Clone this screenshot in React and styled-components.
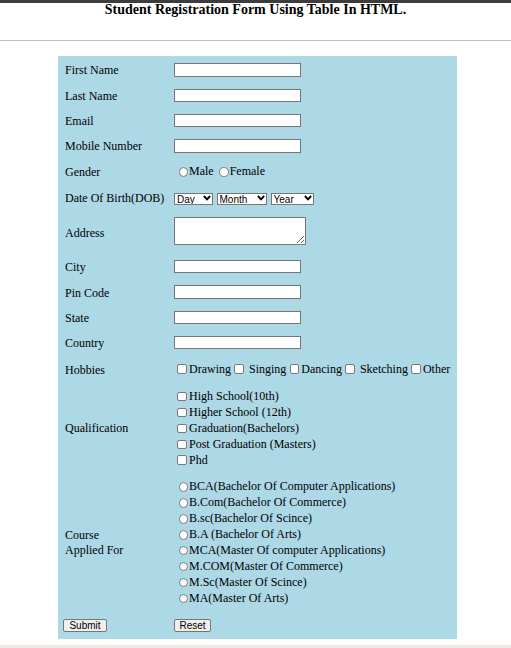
import React from 'react';
import styled, { createGlobalStyle } from 'styled-components';

const Global = createGlobalStyle`
  html, body { margin: 0; padding: 0; background: #fff; overflow: hidden; }
  body { font-family: "Liberation Serif", "Times New Roman", serif; color: #000; }
`;

const Page = styled.div`
  height: 648px;
  display: flex;
  flex-direction: column;
`;

const TopBar = styled.div`
  flex: none;
  height: 3px;
  background: #3c3c3c;
`;

const Title = styled.h1`
  margin: 0;
  font-size: 14px;
  line-height: 13px;
  font-weight: bold;
  text-align: center;
`;

const Rule = styled.hr`
  flex: none;
  margin: 24px 0 0;
  height: 0;
  border: 0;
  border-top: 1px solid #c0c0c0;
`;

const FormTable = styled.form`
  flex: none;
  box-sizing: border-box;
  width: 399px;
  margin: 15px 0 0 58px;
  padding: 1.3px 0 0.3px 5px;
  background: #add8e6;
  display: flex;
  flex-direction: column;
  font-size: 12px;
`;

const Row = styled.div`
  display: grid;
  grid-template-columns: 111px 1fr;
  align-items: center;
  padding: ${p => p.$pad ?? 6}px 0;
`;

const Label = styled.div`
  padding: ${p => p.$shift ?? 1.2}px 0 0 2px;
  margin-bottom: -${p => p.$shift ?? 1.2}px;
  line-height: ${p => p.$lh ?? '13.33px'};
`;

const TextField = styled.input`
  display: block;
  box-sizing: border-box;
  width: 126.5px;
  height: 13.33px;
  margin: 0;
  padding: 0 2px;
  border: 1px solid #767676;
  background: #fff;
  font: 10px "Liberation Sans", Arial, sans-serif;
  outline: none;
`;

const Area = styled.textarea`
  display: block;
  box-sizing: border-box;
  width: 131.5px;
  height: 28px;
  margin: 0 0 3.4px;
  padding: 1px;
  border: 1px solid #767676;
  background: #fff;
  font: 10px "Liberation Mono", monospace;
  resize: both;
  outline: none;
`;

const Options = styled.div`
  display: flex;
  align-items: center;
  height: ${p => p.$h}px;
  gap: ${p => p.$gap ?? 0}px;
`;

const Choice = styled.label`
  display: inline-flex;
  align-items: center;
  white-space: pre;
  line-height: 13.33px;
`;

const Stack = styled.div`
  display: flex;
  flex-direction: column;
`;

const StackChoice = styled(Choice)`
  height: ${p => p.$h ?? 15.9}px;
`;

const Box = styled.input.attrs({ type: 'checkbox' })`
  appearance: none;
  -webkit-appearance: none;
  flex: none;
  box-sizing: border-box;
  width: 9.5px;
  height: 9.5px;
  margin: 0 2.2px 0 3.3px;
  border: 1px solid #7a7a7a;
  border-radius: 2px;
  background: #fff;
`;

const Dot = styled.input.attrs({ type: 'radio' })`
  appearance: none;
  -webkit-appearance: none;
  flex: none;
  box-sizing: border-box;
  width: 9.5px;
  height: 9.5px;
  margin: 0 1px 0 4.5px;
  border: 1px solid #7a7a7a;
  border-radius: 50%;
  background: #fff;
`;

const Selects = styled.div`
  display: flex;
  align-items: center;
  gap: 3.5px;
  height: 13.33px;
`;

const SelectWrap = styled.span`
  position: relative;
  display: inline-block;
  width: ${p => p.$w}px;
  height: 12px;
`;

const Select = styled.select`
  appearance: none;
  -webkit-appearance: none;
  box-sizing: border-box;
  width: 100%;
  height: 100%;
  margin: 0;
  padding: 0 0 0 2px;
  border: 1px solid #767676;
  border-radius: 0;
  background: #fff;
  color: #000;
  font: 10px "Liberation Sans", Arial, sans-serif;
  outline: none;
`;

const Chevron = styled.svg`
  position: absolute;
  right: 2.5px;
  top: 3.2px;
  pointer-events: none;
`;

const Button = styled.button`
  box-sizing: border-box;
  width: ${p => p.$w}px;
  height: 13.33px;
  margin: 0;
  padding: 0;
  border: 1px solid #767676;
  border-radius: 2px;
  background: #efefef;
  color: #000;
  font: 10px "Liberation Sans", Arial, sans-serif;
  line-height: 11px;
`;

const BottomStrip = styled.div`
  flex: none;
  margin-top: auto;
  height: 3.3px;
  background: #eeeae7;
`;

const DropSelect = ({ w, label }) => (
  <SelectWrap $w={w}>
    <Select defaultValue="">
      <option value="">{label}</option>
    </Select>
    <Chevron width="8" height="6" viewBox="0 0 8 6">
      <path d="M0.9 1 L4 4.3 L7.1 1" fill="none" stroke="#000" strokeWidth="1.9" />
    </Chevron>
  </SelectWrap>
);

const textRows = ['First Name', 'Last Name', 'Email', 'Mobile Number'];
const placeRows = ['City', 'Pin Code', 'State', 'Country'];
const hobbies = ['Drawing', ' Singing', 'Dancing', ' Sketching', 'Other'];
const qualifications = [
  'High School(10th)',
  'Higher School (12th)',
  'Graduation(Bachelors)',
  'Post Graduation (Masters)',
  'Phd',
];
const courses = [
  'BCA(Bachelor Of Computer Applications)',
  'B.Com(Bachelor Of Commerce)',
  'B.sc(Bachelor Of Scince)',
  'B.A (Bachelor Of Arts)',
  'MCA(Master Of computer Applications)',
  'M.COM(Master Of Commerce)',
  'M.Sc(Master Of Scince)',
  'MA(Master Of Arts)',
];

export default function App() {
  return (
    <Page>
      <Global />
      <TopBar />
      <Title>Student Registration Form Using Table In HTML.</Title>
      <Rule />
      <FormTable onSubmit={e => e.preventDefault()}>
        {textRows.map(l => (
          <Row key={l}>
            <Label>{l}</Label>
            <TextField type="text" />
          </Row>
        ))}
        <Row>
          <Label>Gender</Label>
          <Options $h={14.67} $gap={1}>
            <Choice><Dot name="gender" />Male</Choice>
            <Choice><Dot name="gender" />Female</Choice>
          </Options>
        </Row>
        <Row>
          <Label>Date Of Birth(DOB)</Label>
          <Selects>
            <DropSelect w={39} label="Day" />
            <DropSelect w={50.5} label="Month" />
            <DropSelect w={43.5} label="Year" />
          </Selects>
        </Row>
        <Row>
          <Label>Address</Label>
          <Area />
        </Row>
        {placeRows.map(l => (
          <Row key={l}>
            <Label>{l}</Label>
            <TextField type="text" />
          </Row>
        ))}
        <Row>
          <Label>Hobbies</Label>
          <Options $h={15.9}>
            {hobbies.map(h => (
              <Choice key={h}><Box />{h}</Choice>
            ))}
          </Options>
        </Row>
        <Row $pad={5.5}>
          <Label $shift={0}>Qualification</Label>
          <Stack>
            {qualifications.map(q => (
              <StackChoice key={q}><Box />{q}</StackChoice>
            ))}
          </Stack>
        </Row>
        <Row $pad={5.5}>
          <Label $shift={0} $lh="15px">Course<br />Applied For</Label>
          <Stack>
            {courses.map(c => (
              <StackChoice key={c}><Dot name="course" />{c}</StackChoice>
            ))}
          </Stack>
        </Row>
        <Row>
          <div><Button type="submit" $w={44}>Submit</Button></div>
          <div><Button type="reset" $w={37}>Reset</Button></div>
        </Row>
      </FormTable>
      <BottomStrip />
    </Page>
  );
}
